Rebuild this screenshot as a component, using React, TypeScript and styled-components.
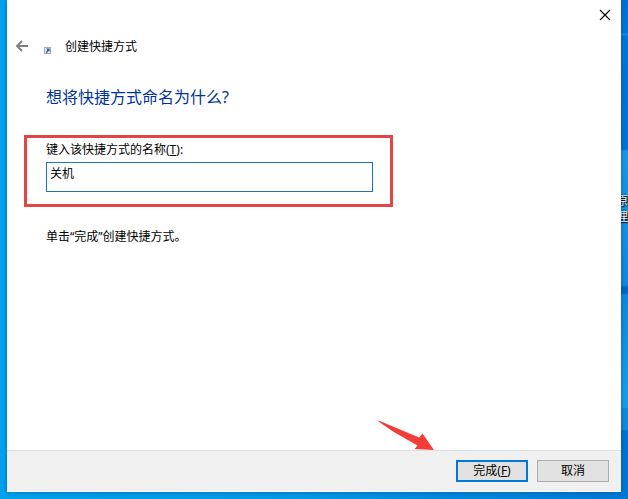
import React from 'react';
import styled, { createGlobalStyle } from 'styled-components';

const GlobalStyle = createGlobalStyle`
  *, *::before, *::after { box-sizing: border-box; }
  body {
    margin: 0;
    font-family: "Noto Sans", "Noto Sans CJK SC", sans-serif;
    font-size: 12px;
    line-height: 16px;
    color: #000;
  }
  button, input { font: inherit; color: inherit; }
`;

const Desktop = styled.div`
  position: relative;
  display: flex;
  min-height: 100vh;
  padding: 0 7px 7px;
  overflow: hidden;
  background: linear-gradient(90deg, #00a1ed 0%, #0499e6 45%, #0078d5 100%);
`;

const Wallpaper = styled.div`
  position: absolute;
  top: 0;
  right: 0;
  bottom: 0;
  width: 8px;
  background: linear-gradient(
    180deg,
    #0070d8 0,
    #0078dc 33px,
    #1c88e2 34px,
    #0078dc 37px,
    #0074d6 149px,
    #1a98e8 151px,
    #1590e4 230px,
    #0f8ade 285px,
    #0068c4 287px,
    #0068c4 293px,
    #0f8ade 295px,
    #17a0e6 400px,
    #17a0e6 407px,
    #0f8cdd 409px,
    #0f8cdd 429px,
    #0074d4 431px,
    #0078d5 100%
  );
`;

const DesktopLabel = styled.span`
  position: absolute;
  top: 193px;
  right: 0;
  width: 12px;
  color: #fff;
  text-shadow: 1px 1px 1px #000, 0 0 2px #000;
`;

const Dialog = styled.form`
  position: relative;
  display: flex;
  flex: 1;
  flex-direction: column;
  min-width: 0;
  padding-bottom: 1px;
  background: #fff;
  box-shadow: 0 0 5px rgba(0, 40, 90, 0.45);
`;

const TitleBar = styled.div`
  display: flex;
  justify-content: flex-end;
  height: 30px;
`;

const IconButton = styled.button<{ $width: number }>`
  display: flex;
  align-items: center;
  justify-content: center;
  width: ${({ $width }) => $width}px;
  padding: 0;
  border: 0;
  background: transparent;
`;

const Header = styled.header`
  display: flex;
  align-items: center;
  height: 32px;
  padding-left: 8px;
`;

const ShortcutIcon = styled.svg`
  margin: 8px 14px 0 15px;
`;

const WizardName = styled.span`
  padding-top: 2px;
`;

const Content = styled.main`
  display: flex;
  flex: 1;
  flex-direction: column;
  align-items: flex-start;
  padding: 23px 17px 0;
`;

const Question = styled.h1`
  margin: 0 22px 26px;
  font-size: 16px;
  font-weight: 400;
  line-height: 24px;
  color: #003399;
`;

const Highlight = styled.div`
  display: flex;
  flex-direction: column;
  gap: 4px;
  width: 100%;
  max-width: 369px;
  padding: 4px 17px 12px 19px;
  border: 3px solid #e34444;
`;

const NameInput = styled.input`
  width: 100%;
  height: 30px;
  padding: 1px 3px 9px;
  border: 1px solid #1f74b8;
  border-radius: 0;
  outline: 0;
  background: #fff;
`;

const Hint = styled.p`
  margin: 22px 22px;
`;

const Footer = styled.footer`
  display: flex;
  justify-content: flex-end;
  gap: 9px;
  padding: 9px 12px;
  border-top: 1px solid #dfdfdf;
  background: #f0f0f0;
`;

const ButtonAnchor = styled.div`
  position: relative;
  display: flex;
`;

const ActionButton = styled.button<{ $primary?: boolean }>`
  display: flex;
  align-items: center;
  justify-content: center;
  width: 72px;
  height: 22px;
  padding: 0;
  border: ${({ $primary }) => ($primary ? '2px solid #0078d7' : '1px solid #adadad')};
  background: #e1e1e1;
`;

const Pointer = styled.svg`
  position: absolute;
  right: 93px;
  bottom: 31px;
`;

export default function App() {
  return (
    <>
      <GlobalStyle />
      <Desktop>
        <Wallpaper />
        <DesktopLabel>原理</DesktopLabel>
        <Dialog onSubmit={(event: React.FormEvent) => event.preventDefault()}>
          <TitleBar>
            <IconButton type="button" aria-label="关闭" $width={32}>
              <svg width="12" height="12" viewBox="0 0 12 12">
                <path d="M1 1 L11 11 M11 1 L1 11" stroke="#000" strokeWidth="1.1" />
              </svg>
            </IconButton>
          </TitleBar>
          <Header>
            <IconButton type="button" aria-label="返回" $width={14}>
              <svg width="14" height="12" viewBox="0 0 14 12" fill="none" stroke="#808080" strokeWidth="1.9">
                <path d="M13 6 H2.2 M7 1 L2 6 L7 11" />
              </svg>
            </IconButton>
            <ShortcutIcon width="7" height="7" viewBox="0 0 7 7" aria-hidden="true">
              <rect x="0.5" y="0.5" width="6" height="6" fill="#e8f0f8" stroke="#9eacba" />
              <path d="M2 1.5 H5.6 V4.8 L4.6 3.9 L2.8 6 L1.7 5.2 L3.3 3 Z" fill="#285b9c" />
            </ShortcutIcon>
            <WizardName>创建快捷方式</WizardName>
          </Header>
          <Content>
            <Question>想将快捷方式命名为什么?</Question>
            <Highlight>
              <label htmlFor="shortcut-name">
                键入该快捷方式的名称(<u>T</u>):
              </label>
              <NameInput id="shortcut-name" type="text" defaultValue="关机" />
            </Highlight>
            <Hint>单击“完成”创建快捷方式。</Hint>
          </Content>
          <Footer>
            <ButtonAnchor>
              <Pointer width="58" height="32" viewBox="0 0 58 32" aria-hidden="true">
                <path d="M0 1.5 L4 2.5 L42 18.5 L45.5 14.5 L57 31 L37.5 30 L40.5 26.5 L16 12.5 Z" fill="#f43c38" />
              </Pointer>
              <ActionButton type="submit" $primary>
                <span>
                  完成(<u>F</u>)
                </span>
              </ActionButton>
            </ButtonAnchor>
            <ActionButton type="button">取消</ActionButton>
          </Footer>
        </Dialog>
      </Desktop>
    </>
  );
}
